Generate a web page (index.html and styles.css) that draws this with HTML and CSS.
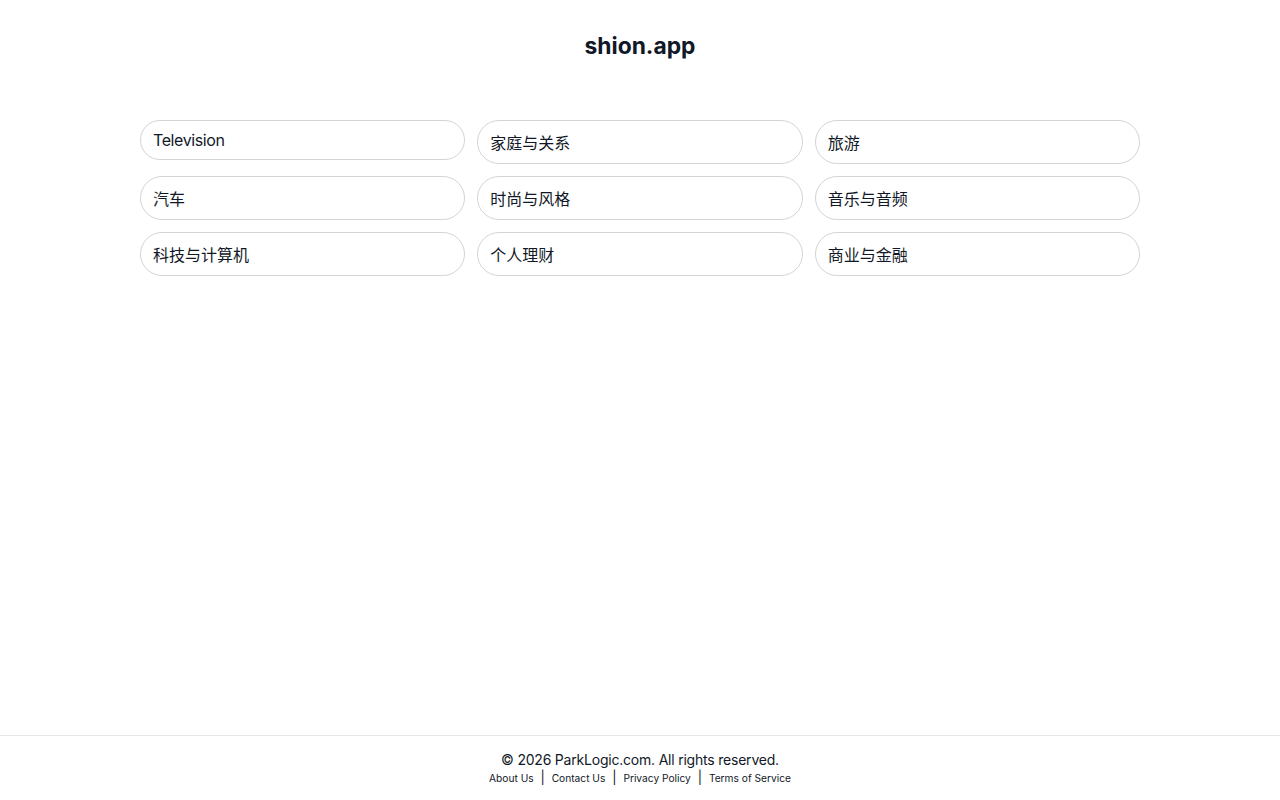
FILE: index.html
```html
<!DOCTYPE html>
<html lang="zh">
<head>
  <meta charset="UTF-8" />
  <meta name="viewport" content="width=device-width, initial-scale=1.0"/>
  <title>shion.app</title>
  <link rel="stylesheet" href="styles.css">
</head>
<body>
  <div class="page">
    <header class="site-header">
      <h1>shion.app</h1>
    </header>

    <main class="topics">
      <a class="topic" href="#" lang="en">Television</a>
      <a class="topic" href="#">家庭与关系</a>
      <a class="topic" href="#">旅游</a>
      <a class="topic" href="#">汽车</a>
      <a class="topic" href="#">时尚与风格</a>
      <a class="topic" href="#">音乐与音频</a>
      <a class="topic" href="#">科技与计算机</a>
      <a class="topic" href="#">个人理财</a>
      <a class="topic" href="#">商业与金融</a>
    </main>

    <footer class="site-footer" lang="en">
      <p class="copyright">&copy; 2026 ParkLogic.com. All rights reserved.</p>
      <nav class="footer-links">
        <a href="#">About Us</a>
        <span class="sep">|</span>
        <a href="#">Contact Us</a>
        <span class="sep">|</span>
        <a href="#">Privacy Policy</a>
        <span class="sep">|</span>
        <a href="#">Terms of Service</a>
      </nav>
    </footer>
  </div>
</body>
</html>
```

FILE: styles.css
```css
:root {
  --text: #111827;
  --border: #d4d4d8;
  --line: #e5e7eb;
}

* {
  box-sizing: border-box;
  margin: 0;
  padding: 0;
}

body {
  font-family: Inter, "Noto Sans CJK SC", sans-serif;
  color: var(--text);
  background: #ffffff;
}

.page {
  min-height: 100vh;
  display: flex;
  flex-direction: column;
}

.site-header {
  padding-top: 32px;
  text-align: center;
}

.site-header h1 {
  font-size: 22.8px;
  font-weight: 700;
  line-height: 28px;
}

.topics {
  flex: 1;
  width: 1000px;
  margin: 60px auto 0;
  display: grid;
  grid-template-columns: repeat(3, 1fr);
  gap: 12px;
  align-items: start;
  align-content: start;
}

.topic {
  display: block;
  padding: 9px 12px;
  border: 1px solid var(--border);
  border-radius: 9999px;
  font-size: 16px;
  color: var(--text);
  text-decoration: none;
}

.topic:lang(en) {
  letter-spacing: -0.025em;
}

.site-footer {
  border-top: 1px solid var(--line);
  padding: 15px 0 14px;
  text-align: center;
}

.copyright {
  font-size: 14px;
  line-height: 18px;
  letter-spacing: -0.015em;
}

.footer-links {
  height: 16px;
  margin-top: 1px;
  font-size: 10.2px;
  line-height: 16px;
}

.footer-links a {
  color: var(--text);
  text-decoration: none;
}

.footer-links .sep {
  font-size: 13px;
  line-height: 1;
  margin: 0 4px;
}
```
